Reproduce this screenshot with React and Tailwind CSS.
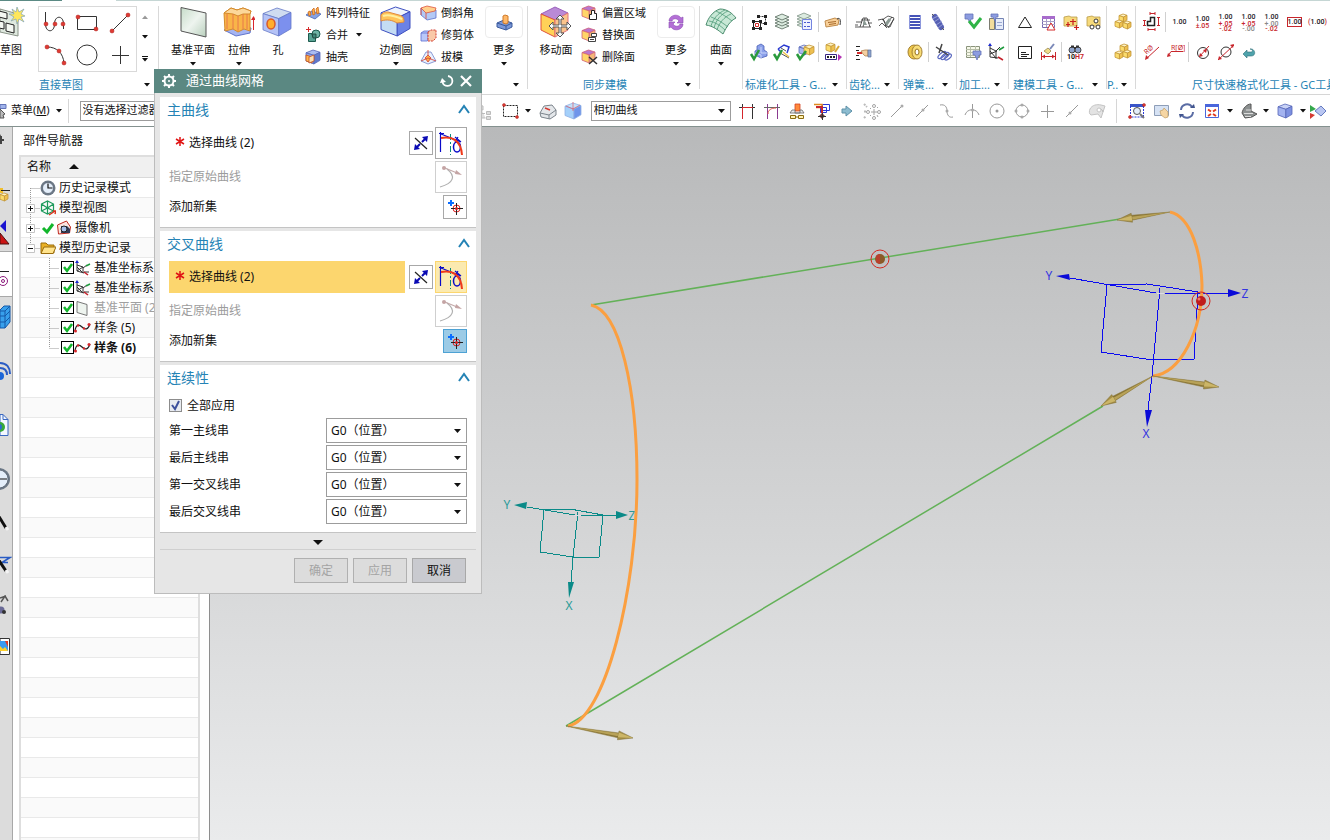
import { useState } from "react";

/* ---------- small drawing helpers ---------- */

function Svg({ w = 20, h = 20, className = "", children }) {
  return (
    <svg width={w} height={h} viewBox={`0 0 ${w} ${h}`} fill="none" aria-hidden="true" className={`shrink-0 ${className}`}>
      {children}
    </svg>
  );
}

function Cube({ x = 0, y = 0, s = 16, top = "#dfe6fb", left = "#a9b8f0", right = "#6f83dc", line = "#5566b8", lw = 0.8 }) {
  const p = (a, b) => `${x + a * s},${y + b * s}`;
  return (
    <g stroke={line} strokeWidth={lw} strokeLinejoin="round">
      <polygon points={`${p(0, 0.2)} ${p(0.5, 0)} ${p(1, 0.16)} ${p(0.56, 0.38)}`} fill={top} />
      <polygon points={`${p(0, 0.2)} ${p(0.56, 0.38)} ${p(0.56, 1)} ${p(0, 0.78)}`} fill={left} />
      <polygon points={`${p(0.56, 0.38)} ${p(1, 0.16)} ${p(1, 0.74)} ${p(0.56, 1)}`} fill={right} />
    </g>
  );
}

const Gold = (props) => <Cube top="#fff3c4" left="#fbdc6c" right="#eec050" line="#c4983a" {...props} />;
const Pink = (props) => <Cube top="#b877cf" left="#ffd568" right="#f4b878" line="#d0607a" {...props} />;
const Dot = ({ x, y, r = 2 }) => <circle cx={x} cy={y} r={r} fill="#e03a32" stroke="#a81f1c" strokeWidth="0.5" />;

function Caret({ className = "", color = "#111" }) {
  return (
    <Svg w={6} h={4} className={className}>
      <path d="M0 0h6L3 3.5z" fill={color} />
    </Svg>
  );
}

const Clock = ({ cx, cy, r }) => (
  <g>
    <circle cx={cx} cy={cy} r={r} fill="#6c7886" />
    <circle cx={cx} cy={cy} r={r - 2} fill="#e4eefa" stroke="#4c5866" strokeWidth="0.7" />
    <path d={`M${cx} ${cy - r + 3}V${cy}H${cx + r - 3}`} stroke="#111" strokeWidth="1.2" />
  </g>
);

const GreenCheck = ({ d = "M2 12l3 5 5-9" }) => <path d={d} stroke="#2a9a3c" strokeWidth="2.5" />;

/* ---------- ribbon icons ---------- */

const big = {
  sketch: (
    <Svg w={26} h={32}>
      <path d="M0 3L18 8V30L0 26z" fill="#dfe9df" stroke="#8a9488" />
      <path d="M-1 5l8 2v6l-8-2zM-1 15l5 1v7l-5-1zM6 17l8 2v8l-8-2z" fill="#f4f8f2" stroke="#222" />
      <path d="M17 1l2 5 5-3-3 5 4 2-4 1 3 5-5-3-2 5-1-5-5 2 3-4-5-3h5l-2-5 4 3z" fill="#ffe75a" stroke="#7fa3b8" strokeWidth="0.7" />
    </Svg>
  ),
  plane: (
    <Svg w={28} h={32}>
      <defs>
        <linearGradient id="pl" x1="0" y1="0" x2="1" y2="1">
          <stop offset="0" stopColor="#c6dcc9" />
          <stop offset="0.5" stopColor="#eef4ef" />
          <stop offset="1" stopColor="#b9d0bd" />
        </linearGradient>
      </defs>
      <path d="M2 1.500L27 7V31L2 25z" fill="url(#pl)" stroke="#555" />
    </Svg>
  ),
  extrude: (
    <Svg w={32} h={32}>
      <path d="M1 24l12 6 14-3 1-5-15-3z" fill="#a4b4f2" stroke="#6074cc" />
      <path d="M1 7l7-5 6 2 6-2 8 3-1 3v17l-6-2-6 3-5-3-8 2z" fill="#f9b548" stroke="#d48a2c" />
      <path d="M1 7l9 1 5 2 5-2 7 0 1-3-8-3-6 2-6-2z" fill="#fcd79a" stroke="#d48a2c" />
      <path d="M4 8v15M10 8v15M15 10v15M20 8v15M24 8v15" stroke="#e46a4c" strokeWidth="0.800" />
      <path d="M30.500 24V13" stroke="#d8262c" />
      <path d="M28 14l2.500-4 2.500 4z" fill="#d8262c" />
    </Svg>
  ),
  hole: (
    <Svg w={32} h={32}>
      <Cube x={1} y={2} s={28} top="#cfdcf0" left="#b4c2f6" right="#7c90ee" line="#6478c8" />
      <ellipse cx="9" cy="18" rx="4" ry="5" fill="#ffae2e" stroke="#d95a2a" strokeWidth="1.500" />
    </Svg>
  ),
  blend: (
    <Svg w={32} h={32}>
      <Cube x={1} y={1} s={29} top="#eef4fd" left="#c4dcf4" right="#6b82e6" line="#3d4fc0" lw={1} />
      <path d="M1 9c2-3 5-3 7-3l11 3c4 1 5 3 5 7l-7 1C12 14 7 13 1 15z" fill="#ffc45a" stroke="#e08a3e" />
      <path d="M3 10c5-2 12 0 19 3" stroke="#fff0a0" strokeWidth="2" />
    </Svg>
  ),
  more: (
    <Svg>
      <path d="M3 11l7-3 8 3v4l-6 3-9-3z" fill="#7b98d8" stroke="#3b5a9c" />
      <path d="M3 11l9 3 6-3M12 14v4" stroke="#3b5a9c" />
      <path d="M9 4l2-1 3 1v7l-2 1-3-1z" fill="#ffb868" stroke="#d07a28" />
    </Svg>
  ),
  moveFace: (
    <Svg w={32} h={32}>
      <path d="M1 8L15 1l13 6-13 7z" fill="#b98ad6" stroke="#9a60bc" />
      <path d="M1 8l14 6v17L1 24z" fill="#ffd257" stroke="#e0533c" />
      <path d="M15 14l13-7v17l-13 7z" fill="#fbc48c" stroke="#e0737c" />
      <path d="M20 9l4 4h-3v6h6v-3l4 4-4 4v-3h-6v6h3l-4 4-4-4h3v-6h-6v3l-4-4 4-4v3h6v-6h-3z" fill="#fafafa" stroke="#555" />
    </Svg>
  ),
  swap: (
    <Svg>
      <path d="M3 9c0-6 9-8 12-3l2-1v6h-6l2-2c-2-3-6-3-7 0z" fill="#b46fd6" stroke="#8c4fb4" strokeWidth="0.600" />
      <path d="M17 12c0 6-9 8-12 3l-2 1v-6h6l-2 2c2 3 6 3 7 0z" fill="#b46fd6" stroke="#8c4fb4" strokeWidth="0.600" />
    </Svg>
  ),
  surface: (
    <Svg w={32} h={32}>
      <path d="M1 19C3 12 8 5 15 3c7 0 12 4 16 9-6 3-9 8-13 16C13 24 8 20 1 19z" fill="#c8e8d6" stroke="#4c8d6f" />
      <path d="M6 11c6 2 12 6 17 10M11 5c6 3 11 6 16 10M4 15c6 1 12 5 16 9M6 20C8 13 13 7 20 4M12 24c2-7 7-13 14-16M9 22c2-8 7-14 14-17" stroke="#4f9a78" strokeWidth="0.800" />
    </Svg>
  ),
};

const small = {
  pattern: (
    <Svg w={17} h={16}>
      <path d="M1 10l6-4 9 3-6 5z" fill="#86a2e4" stroke="#4967b4" strokeWidth="0.800" />
      <path d="M3 7l2-1 1 4-2 1zM7 5l2-2 1 6-2 1zM11 4l2-2 1 6-2 1z" fill="#ffb04a" stroke="#cc6a1e" strokeWidth="0.800" />
    </Svg>
  ),
  unite: (
    <Svg w={17} h={16}>
      <path d="M3.500 0v5M1 2.500h5" stroke="#d42a2a" />
      <path d="M3.500 6.500h7v8h-7z" fill="#58a394" stroke="#1d5a4e" />
      <circle cx="11" cy="7" r="4" fill="#6db3a4" stroke="#1d5a4e" />
      <path d="M7 7h4v4H8z" fill="#3f8a7b" stroke="#1d3a34" strokeWidth="0.800" />
    </Svg>
  ),
  shell: (
    <Svg w={17} h={16}>
      <Cube x={1} y={1} s={14} top="#a9bcf2" left="#8da4e8" right="#5f79cc" />
      <path d="M1 6l6 2v6l-6-2z" fill="#ffb54e" stroke="#c4521e" strokeWidth="0.800" />
      <path d="M4 8l5-2v6l-5 2z" fill="#fbe0b4" stroke="#c4521e" strokeWidth="0.800" />
    </Svg>
  ),
  chamfer: (
    <Svg w={17} h={16}>
      <path d="M1 3l5 4 10-2v8l-9 2-6-5z" fill="#b3c9f5" stroke="#5a70cc" strokeWidth="0.800" />
      <path d="M1 3l6-2 9 2-1 3-9 2z" fill="#ffd08c" stroke="#dd5540" strokeWidth="0.800" />
      <path d="M1 3v7M6 8v6" stroke="#dd4530" strokeWidth="0.800" />
    </Svg>
  ),
  trim: (
    <Svg w={17} h={16}>
      <path d="M1 6l3-2h6v8l-3 2H1z" fill="#b9c8fa" stroke="#5a6cd0" strokeWidth="0.800" />
      <path d="M1 6h7v8" stroke="#5a6cd0" strokeWidth="0.800" />
      <path d="M8 5l3-2h5v8l-3 3H8z" fill="#f9c9a8" stroke="#d13c30" strokeDasharray="2 1" />
    </Svg>
  ),
  draft: (
    <Svg w={17} h={16}>
      <path d="M1 12L6 3h5l5 9-8 3z" fill="#e9effc" stroke="#7084cc" strokeWidth="0.800" />
      <path d="M5 9l3-3 3 3-3 4z" fill="#ffb04a" stroke="#d13c30" strokeWidth="0.800" />
      <path d="M8 1v5M1 12l7-3 8 3" stroke="#d13c30" strokeWidth="0.800" />
    </Svg>
  ),
  offset: (
    <Svg w={17} h={16}>
      <Pink x={1} y={1} s={13} />
      <path d="M8.500 9.500h2v-4h3v3h2v6h-7z" fill="#fff" stroke="#222" />
    </Svg>
  ),
  replace: (
    <Svg w={17} h={16}>
      <Pink x={1} y={1} s={13} />
      <path d="M10.500 6.500h5v3h-5zM7.500 10.500h7v4h-7zM9 12.500h4" fill="#fff" stroke="#444" />
    </Svg>
  ),
  remove: (
    <Svg w={17} h={16}>
      <Pink x={1} y={1} s={13} />
      <path d="M8 8l8 7M16 8l-8 7" stroke="#333" strokeWidth="1.500" />
    </Svg>
  ),
};

const tool = {
  attr: (
    <Svg>
      <path d="M4.500 9.500h7v7h-7z" stroke="#222" />
      <path d="M6.500 11.500h3v3h-3z" fill="#fff" stroke="#d42a2a" />
      <path d="M9.500 4.500h7v7h-5" stroke="#333" strokeDasharray="2 1" />
      <path d="M3 8h3v3H3zM10 8h3v3h-3zM3 15h3v3H3zM10 15h3v3h-3zM8 3h3v3H8zM15 3h3v3h-3zM15 10h3v3h-3z" fill="#222" />
    </Svg>
  ),
  layers: (
    <Svg>
      {[14, 11, 8, 5].map((y) => (
        <path key={y} d={`M3 ${y}l7-3 7 3-7 3z`} fill="#dcebe0" stroke="#55685c" strokeWidth="0.800" />
      ))}
    </Svg>
  ),
  layerList: (
    <Svg>
      {[13, 10, 7, 4].map((y) => (
        <path key={y} d={`M2 ${y}l7-3 7 3-7 3z`} fill="#dcebe0" stroke="#7f9387" strokeWidth="0.800" />
      ))}
      <path d="M7.500 7.500h9v10h-9z" fill="#eef2ff" stroke="#7484e0" />
      <path d="M9 10.500h2M12 10.500h3M9 14.500h2M12 14.500h3" stroke="#4a5ad0" />
    </Svg>
  ),
  tag: (
    <Svg>
      <path d="M2 9l10-3 4 2-1 5-12 2z" fill="#f8cf98" stroke="#c08c4c" />
      <path d="M5 10.500l8-1M6 12.500l7-1" stroke="#a96c2c" />
      <path d="M14 7c3-2 4 1 3 6" stroke="#333" />
    </Svg>
  ),
  checkPart: (
    <Svg>
      <path d="M8 4l4-2 3 2v4l3 2v4l-6 2-6-3v-4l2-1z" fill="#8ba0ea" stroke="#4a60b8" strokeWidth="0.800" />
      <path d="M12 5v6l6 0M6 11l6 2v3" stroke="#c9d5fa" />
      <GreenCheck />
    </Svg>
  ),
  checkDraw: (
    <Svg>
      <path d="M6 7l6-4 5 2-2 6M6 7l3 3" stroke="#2a3ad0" strokeWidth="1.500" fill="#fff" />
      <path d="M9 6l5 3M8 11l9 5" stroke="#555" />
      <path d="M11 10l6 5" stroke="#f0c34a" strokeWidth="1.500" />
      <GreenCheck />
    </Svg>
  ),
  checkAssy: (
    <Svg>
      <Cube x={4} y={3} s={10} />
      <Gold x={9} y={3} s={10} />
      <GreenCheck d="M2 12l3 5 6-8" />
    </Svg>
  ),
  stamp: (
    <Svg>
      <Gold x={3} y={1} s={9} />
      <path d="M2.500 12.500h11v5h-11z" fill="#fff" stroke="#3a2a86" />
      <path d="M4 15h2M7 15h2M10 15h2" stroke="#222" strokeWidth="2" />
      <path d="M16 4l-4 6" stroke="#d8a93a" strokeWidth="2" />
      <path d="M15 12l4 3-4 4z" fill="#b434b4" />
    </Svg>
  ),
  gear: (
    <Svg>
      <path d="M2 15h5l3-9h4l3 9M2 13h3M8 8h9M3 10h6M15 11h4M12 6l-2 9M7 15h11" stroke="#333" strokeWidth="0.800" />
      <path d="M10 13l1-6 3 6z" fill="#8b9a94" />
    </Svg>
  ),
  bevel: (
    <Svg>
      <path d="M2 8l5-1 3 7 4 1 4-9M6 8l6-4 6 2M9 14l7-9M3 14l3-3 5 5M7 7l4 7M12 16l6-9" stroke="#333" strokeWidth="0.800" />
      <path d="M9 11l4-5 2 2-4 6z" fill="#8b9a94" />
    </Svg>
  ),
  pointer: (
    <Svg>
      <path d="M3 4.500h4M3 8.500h3M3 13.500h3M3 17.500h4" stroke="#222" />
      <path d="M4 11h5" stroke="#d42a2a" strokeWidth="2" />
      <path d="M8 9l4-1h3v6h-3l-2-2z" fill="#f5cfa0" stroke="#a4743c" strokeWidth="0.700" />
      <path d="M15 8h3v7h-3z" fill="#8fa6cf" stroke="#5b7099" strokeWidth="0.700" />
    </Svg>
  ),
  spring: (
    <Svg>
      {[4, 7, 10, 13, 16].map((y) => (
        <path key={y} d={`M5 ${y}h11`} stroke="#4654b8" strokeWidth="2" />
      ))}
      <path d="M4.500 3v14M15.500 3v14" stroke="#8c97dc" />
    </Svg>
  ),
  tension: (
    <Svg>
      <path d="M7 5l6 10" stroke="#5660b4" strokeWidth="6" strokeLinecap="round" />
      <path d="M4 7l6-3M6 10l6-4M8 13l6-4M10 16l5-4" stroke="#a4addf" strokeWidth="0.800" />
      <path d="M6 4L4 2M14 16l2 2" stroke="#555" />
    </Svg>
  ),
  disc: (
    <Svg>
      <ellipse cx="9" cy="10" rx="6" ry="7" fill="#ecc64a" stroke="#a48030" />
      <ellipse cx="12" cy="10" rx="5" ry="7" fill="#f8dd78" stroke="#a48030" />
      <ellipse cx="12" cy="10" rx="2" ry="3" fill="#fff" stroke="#94701a" />
    </Svg>
  ),
  springDel: (
    <Svg>
      <g stroke="#5a68c0" strokeWidth="1.200">
        <ellipse cx="9" cy="13" rx="5" ry="2" transform="rotate(-40 9 13)" />
        <ellipse cx="12" cy="14" rx="5" ry="2" transform="rotate(-40 12 14)" />
        <ellipse cx="15" cy="15" rx="4" ry="2" transform="rotate(-40 15 15)" />
      </g>
      <path d="M3 5l12 8M9 2L6 11" stroke="#444" strokeWidth="1.500" />
    </Svg>
  ),
  procOk: (
    <Svg>
      <path d="M2 2h8v5H8l-1 4-2-4H2z" fill="#8c9ce0" stroke="#6474b8" strokeWidth="0.800" />
      <path d="M6 9l5 6 7-9" stroke="#2fb446" strokeWidth="3" />
    </Svg>
  ),
  procDoc: (
    <Svg>
      <path d="M3.500 6.500h5v11h-5z" fill="#f3dd9c" stroke="#7c7c70" />
      <path d="M9.500 6.500h8v11h-8z" fill="#e6ecfa" stroke="#7484b4" />
      <path d="M5 2h7v3h-2l-1 4-2-4H5z" fill="#8c9ce0" stroke="#6474b8" strokeWidth="0.800" />
      <path d="M11 10.500h5M11 13.500h5" stroke="#9aa8d0" />
    </Svg>
  ),
  procTable: (
    <Svg>
      <path d="M3.500 4.500h13v11h-13z" fill="#f6f8e8" stroke="#8a937c" />
      <path d="M3 7.500h13M3 10.500h13M3 13.500h13M7.500 4v11M12.500 4v11" stroke="#b7beA8" />
      <path d="M10 9h8v4h-2l-2 5-2-5h-2z" fill="#8c9ce0" stroke="#6474b8" strokeWidth="0.800" />
    </Svg>
  ),
  csys: (
    <Svg>
      <path d="M4 3v12M4 6l6 3v8M4 15l8 1M10 9l4-4M4 9l6 7M4 12l7-3" stroke="#333" />
      <path d="M2 4h4L4 1z" fill="#1a28d0" />
      <path d="M13 8l5-3" stroke="#1d9a3c" strokeWidth="1.500" />
      <path d="M12 15l5 3" stroke="#c4202a" strokeWidth="1.500" />
    </Svg>
  ),
  triangle: (
    <Svg>
      <path d="M10 5l6.500 10.500h-13z" stroke="#222" />
    </Svg>
  ),
  tableTri: (
    <Svg>
      <path d="M4.500 4.500h12v11h-12z" fill="#fff" stroke="#766ab0" />
      <path d="M4 4h13v3H4z" fill="#a86ccc" />
      <path d="M4 9.500h13M4 12.500h13M8.500 7v8M12.500 7v8" stroke="#a8a0c8" />
      <path d="M13 11l4 7H9z" fill="#fff" stroke="#d42a2a" />
    </Svg>
  ),
  folderPts: (
    <Svg>
      <path d="M3 5l5-1 2 1h6v9H3z" fill="#f6da7c" stroke="#b99a48" strokeWidth="0.800" />
      <path d="M9 9.500h6M12 7v6M13 15.500h5M15.500 13v5M5 12.500h4M7 10v5" stroke="#c81f1f" strokeWidth="1.200" />
    </Svg>
  ),
  folderRing: (
    <Svg>
      <path d="M3 5l5-1 2 1h6v9H3z" fill="#f6da7c" stroke="#b99a48" strokeWidth="0.800" />
      <circle cx="12" cy="9" r="2" fill="#fff" stroke="#333" />
      <circle cx="8" cy="15" r="2" fill="#fff" stroke="#333" />
      <circle cx="14" cy="15" r="2" fill="#fff" stroke="#333" />
    </Svg>
  ),
  note: (
    <Svg>
      <path d="M3.500 4.500h13v12h-13z" fill="#fff" stroke="#222" />
      <path d="M6 10.500h5M6 12.500h8M6 14.500h6" stroke="#222" />
    </Svg>
  ),
  brush: (
    <Svg>
      <path d="M16 2l-4 5" stroke="#7a88b8" strokeWidth="2" />
      <path d="M6 9l4-3 3 3-3 3z" fill="#f0dc8c" stroke="#9c8a4c" strokeWidth="0.800" />
      <path d="M3.500 10v8M17.500 10v8M4 14.500h13" stroke="#c8262c" />
      <path d="M4 14.500l3-2v4zM17 14.500l-3-2v4z" fill="#c8262c" />
    </Svg>
  ),
  addBox: (
    <Svg>
      <Gold x={6} y={2} s={8} />
      <Gold x={2} y={8} s={8} />
      <Gold x={10} y={9} s={8} />
    </Svg>
  ),
  boxes: (
    <Svg>
      <Gold x={7} y={2} s={8} />
      <Gold x={2} y={9} s={8} />
      <Gold x={10} y={8} s={8} />
    </Svg>
  ),
  dimIcon: (
    <Svg>
      <path d="M5.500 13.500v-4h3v-4h4v8z" fill="#fff" stroke="#222" strokeWidth="1.500" />
      <path d="M8 1.500h5M8 0v3M13 0v3M6 17.500h7M6 16v3M13 16v3M2.500 8v6M1 8.500h3M1 13.500h3M16.500 5v9M15 5.500h3M15 13.500h3" stroke="#c8262c" />
    </Svg>
  ),
  diagR: (
    <Svg>
      <path d="M4 17L17 5" stroke="#c8262c" />
      <path d="M3 18l1-5 3 3z" fill="#c8262c" />
      <text x="3" y="11" fontSize="7" fill="#c8262c" transform="rotate(-42 6 10)">RØ</text>
    </Svg>
  ),
  flagR: (
    <Svg>
      <path d="M3 14l3-4.500h12" stroke="#c8262c" />
      <path d="M2 15l1-4 3 3z" fill="#c8262c" />
      <text x="6" y="8" fontSize="7" fill="#c8262c">R[Ø]</text>
    </Svg>
  ),
  diaIn: (
    <Svg>
      <circle cx="10" cy="11" r="5.500" stroke="#333" />
      <path d="M6 15L16 4" stroke="#c8262c" />
      <path d="M6 15l1-4 3 3zM14 7l-1 4-3-3z" fill="#c8262c" />
    </Svg>
  ),
  diaOut: (
    <Svg>
      <circle cx="10" cy="10" r="5" stroke="#333" />
      <path d="M2 18L18 3" stroke="#c8262c" />
      <path d="M2 18l1-4 3 3zM18 2l-4 1 3 3z" fill="#c8262c" />
    </Svg>
  ),
  back: (
    <Svg>
      <path d="M4 12l4-4v2h4c3 0 1-3-1-3 5-1 7 7 1 7H8v2z" fill="#4fa3ac" stroke="#2f7078" strokeWidth="0.600" />
    </Svg>
  ),
};

const bar = {
  ghostTree: (
    <Svg>
      <path d="M2 5l2-1 4 1v4H3zM6.500 8v9h4M6 12.500h4M11.500 10.500h4v3h-4zM11.500 15.500h4v3h-4z" fill="#ddd" stroke="#bbb" />
    </Svg>
  ),
  rect: (
    <Svg>
      <path d="M3.500 4.500h14v11h-14z" stroke="#222" strokeDasharray="2 1" />
      <Dot x={4} y={4} r={1.500} />
      <Dot x={17} y={16} r={1.500} />
    </Svg>
  ),
  faceBox: (
    <Svg>
      <path d="M2 12l4-7 8-1 4 5v5l-6 4-9-2z" fill="#e4e7ea" stroke="#7c848c" />
      <path d="M2 12l9 2 7-5M11 14v4" stroke="#7c848c" />
      <path d="M7 7l5 2" stroke="#d43a32" strokeWidth="1.500" />
    </Svg>
  ),
  blueBox: (
    <Svg>
      <Cube x={2} y={2} s={16} top="#c3e0fa" left="#a4d0fa" right="#6f94ea" line="#8fb0e4" />
      <path d="M10 1v9M3 5l7 3 7-4" stroke="#e05a64" strokeWidth="0.700" />
    </Svg>
  ),
  stopA: (
    <Svg>
      <path d="M5.500 3v15M15.500 3v15M2 6.500h3M15 6.500h3" stroke="#333" />
      <path d="M5 6.500h11M5.500 6v12" stroke="#d4262c" />
    </Svg>
  ),
  stopB: (
    <Svg>
      <path d="M5.500 3v15M15.500 3v15" stroke="#8a3a90" />
      <path d="M2 6.500h16" stroke="#666" />
      <path d="M6 13c0-4 3-6 8-6" stroke="#e4564c" />
    </Svg>
  ),
  chain: (
    <Svg>
      <path d="M8 3h5v7H8z" fill="#ff8a3c" stroke="#d4421e" strokeWidth="0.800" />
      <path d="M5 9h3v3h5V9h2l2 3H3z" fill="#e8ebee" stroke="#666" strokeWidth="0.800" />
      <path d="M3.500 14.500h5v3h-5zM11.500 14.500h5v3h-5zM8 16h4" fill="#fff2b0" stroke="#8a6a10" />
    </Svg>
  ),
  follow: (
    <Svg>
      <path d="M10.500 3.500h7v6h-7zM8.500 6.500h6v5h-6z" stroke="#2a3ad8" />
      <path d="M2 3.500h8v3H4" stroke="#e08a1c" strokeWidth="1.500" />
      <path d="M4 6h6v6" stroke="#c8262c" strokeWidth="2" />
      <path d="M10 12l3 3-3 3-3-3z" fill="#7a3a3a" />
      <path d="M6 15.500h8M10.500 12v7" stroke="#333" />
    </Svg>
  ),
  arrow: (
    <Svg>
      <path d="M5 8h4V5l6 5-6 5v-3H5z" fill="#8cbcd0" stroke="#5e91a8" />
    </Svg>
  ),
  snap: (
    <Svg>
      <g stroke="#a4a4a4">
        <circle cx="12" cy="5" r="1.500" />
        <circle cx="12" cy="17" r="1.500" />
        <circle cx="6" cy="11" r="1.500" />
        <circle cx="17" cy="11" r="1.500" />
        <path d="M12 8v6M9 11h6M8 7l1 1M15 7l1-1M8 15l1-1M15 14l1 2" />
      </g>
      <path d="M2 3l3 3M2 10.500h3M2 17l2-2" stroke="#bbb" strokeWidth="2" strokeDasharray="2 1" />
    </Svg>
  ),
  endPt: (
    <Svg>
      <path d="M4 16L15 5" stroke="#999" />
      <circle cx="15" cy="5" r="1.500" fill="#aaa" />
    </Svg>
  ),
  midPt: (
    <Svg>
      <path d="M4 16L16 4" stroke="#999" />
      <circle cx="11" cy="9" r="1.500" fill="#aaa" />
    </Svg>
  ),
  ctrlPt: (
    <Svg>
      <path d="M3 4c5-1 7 2 7 6s2 7 6 6" stroke="#999" />
      <circle cx="10" cy="10" r="1.500" fill="#aaa" />
    </Svg>
  ),
  cross: (
    <Svg>
      <path d="M3 14c2-7 12-7 14 0M10.500 3v14" stroke="#999" />
      <circle cx="10.500" cy="9" r="1.500" fill="#aaa" />
    </Svg>
  ),
  center: (
    <Svg>
      <circle cx="10" cy="10" r="7" stroke="#999" />
      <circle cx="10" cy="10" r="1.500" fill="#999" />
    </Svg>
  ),
  quad: (
    <Svg>
      <circle cx="10" cy="10" r="6" stroke="#999" />
      <g fill="#aaa">
        <circle cx="10" cy="4" r="1.500" />
        <circle cx="10" cy="16" r="1.500" />
        <circle cx="4" cy="10" r="1.500" />
        <circle cx="16" cy="10" r="1.500" />
      </g>
    </Svg>
  ),
  plus: (
    <Svg>
      <path d="M4 10.500h13M10.500 4v13" stroke="#999" />
    </Svg>
  ),
  onCurve: (
    <Svg>
      <path d="M4 16L16 4" stroke="#999" />
      <circle cx="8" cy="12" r="1.500" fill="#aaa" />
    </Svg>
  ),
  onFace: (
    <Svg>
      <path d="M3 8c2-4 7-5 11-4l4 1-4 12-3-4-7 1c-2-1-2-4-1-6z" fill="#e3e3e3" stroke="#c4c4c4" />
      <path d="M12 8c2 0 4 1 4 3" stroke="#b4b4b4" />
      <circle cx="12" cy="9" r="2" fill="#fff" stroke="#c4c4c4" />
    </Svg>
  ),
  fit: (
    <Svg>
      <path d="M3 3h14v3H3z" fill="#3a56c8" />
      <path d="M3.500 5v11h13V5" stroke="#2a3ad8" strokeDasharray="2 1" />
      <circle cx="10" cy="10" r="3.500" fill="#e4eefa" stroke="#555" />
      <path d="M13 13l4 4" stroke="#777" strokeWidth="2" />
      <Dot x={3} y={16} r={1.500} />
      <Dot x={17} y={4} r={1.500} />
    </Svg>
  ),
  pan: (
    <Svg>
      <path d="M2.500 4.500h14v10h-14z" fill="#d6e2f4" stroke="#8e9eb8" />
      <path d="M8 10l3-1 1-2 2 2 2 2v5l-3 1-4-3z" fill="#f6d6a4" stroke="#c09c60" strokeWidth="0.700" />
    </Svg>
  ),
  rotate: (
    <Svg>
      <path d="M4 9a6 6 0 0 1 11-3M16 11a6 6 0 0 1-11 3" stroke="#5a6ca4" strokeWidth="2" />
      <path d="M13 7h5l-1-4zM7 13H2l1 4z" fill="#41558e" />
    </Svg>
  ),
  window: (
    <Svg>
      <path d="M3.500 3.500h13v13h-13z" fill="#fff" stroke="#4a66dc" />
      <path d="M3 3h14v3H3z" fill="#4a66dc" />
      <path d="M6 8.500l3 2M14 8.500l-3 2M6 15l3-2M14 15l-3-2" stroke="#e0381e" strokeWidth="2" />
    </Svg>
  ),
  shade: (
    <Svg>
      <path d="M3 12c1-5 5-9 9-9v7l6 3-5 3-7 1z" fill="#8c9090" stroke="#555" />
      <path d="M5 12.500h9M7 9l5 0M6 15.500h6" stroke="#ddd" />
    </Svg>
  ),
  viewBox: (
    <Svg>
      <Cube x={3} y={3} s={14} top="#c8d2f6" left="#a3b3f0" right="#7c90e0" />
    </Svg>
  ),
  clip: (
    <Svg>
      <path d="M2 4l6 4-6 3z" fill="#35a84c" />
      <path d="M2 12l5 2-5 4z" fill="#d43a32" />
      <path d="M7 10l6-5 5 5-5 5z" fill="#b9c6f2" stroke="#657bc0" />
    </Svg>
  ),
};

/* ---------- ribbon ---------- */

const Sep = () => <div className="my-[5px] w-px shrink-0 bg-[#d9d9d9]" />;
const MiniSep = () => <div className="mx-0.5 h-5 w-px shrink-0 self-center bg-[#d0d0d0]" />;

function Group({ label, labelClass = "pl-0.5", className = "", last = false, children }) {
  return (
    <>
      <section className={`flex shrink-0 flex-col overflow-hidden ${className}`}>
        <div className="flex h-[71px]">{children}</div>
        <div className="mt-[5px] flex h-4 items-center justify-between pr-2">
          <span className={`whitespace-nowrap text-[11px] leading-4 text-[#2583b5] ${labelClass}`}>{label}</span>
          {!last && <Caret />}
        </div>
      </section>
      {!last && <Sep />}
    </>
  );
}

function BigButton({ icon, label, caret = true, boxed = false, className = "" }) {
  return (
    <button type="button" className={`flex shrink-0 flex-col items-center pt-[5px] ${className}`}>
      <span className={`flex h-8 items-center justify-center ${boxed ? "w-full rounded border border-[#ececec]" : ""}`}>{icon}</span>
      <span className="mt-1 h-4 whitespace-nowrap text-[11px] leading-4">{label}</span>
      {caret && <Caret className="mt-1" />}
    </button>
  );
}

function Column({ items, className = "" }) {
  return (
    <div className={`flex shrink-0 flex-col pt-px ${className}`}>
      {items.map(([icon, label, caret]) => (
        <button key={label} type="button" className="flex h-[22px] items-center gap-1 whitespace-nowrap text-[11px]">
          {small[icon]}
          {label}
          {caret && <Caret className="ml-1" />}
        </button>
      ))}
    </div>
  );
}

function ToolGrid({ rows }) {
  return (
    <div className="flex flex-col pl-1 pt-1.5">
      {rows.map((row, i) => (
        <div key={i} className="flex h-[30px]">
          {row.map((item, j) =>
            item === "|" ? (
              <MiniSep key={j} />
            ) : (
              <button key={j} type="button" aria-label={typeof item === "string" ? item : "1.00"} className="flex w-[23px] shrink-0 items-center justify-center">
                {typeof item === "string" ? tool[item] : item}
              </button>
            )
          )}
        </div>
      ))}
    </div>
  );
}

// dimension text with an optional tolerance below it
function Tol({ up, down, className = "" }) {
  return (
    <span className={`flex flex-col items-center font-['Roboto',sans-serif] text-[7px] font-medium leading-[8px] text-[#222] ${className}`}>
      1.00
      {up && <span className={`leading-[6px] ${up === "+.00" ? "text-[#888]" : "text-[#c8262c]"}`}>{up}</span>}
      {down && <span className={`leading-[5px] ${down === "-.00" ? "text-[#888]" : "text-[#c8262c]"}`}>{down}</span>}
    </span>
  );
}

const fitTool = (
  <span className="flex flex-col items-center font-['Roboto',sans-serif] text-[7px] font-bold leading-[7px]">
    <Svg w={14} h={10}>
      <circle cx="4" cy="6" r="3" fill="#8fa4cc" stroke="#444" />
      <circle cx="10" cy="6" r="3" fill="#8fa4cc" stroke="#444" />
      <path d="M3 2.500h3M8 2.500h3M6 4h2" stroke="#333" strokeWidth="2" />
    </Svg>
    <span>
      10<span className="text-[#c8262c]">H7</span>
    </span>
  </span>
);

const sketchTools = [
  ["轮廓", <Svg key="a" w={24} h={24}><path d="M2.500 1v12c0 9 9 9 9 0 0-9 9-9 9 0v5" stroke="#333" /><Dot x={3} y={13} /><Dot x={12} y={13} /><Dot x={20} y={13} /></Svg>],
  ["矩形", <Svg key="b" w={24} h={24}><path d="M2.500 5.500h19v13h-19z" stroke="#333" /><Dot x={3} y={6} /><Dot x={21} y={18} /></Svg>],
  ["直线", <Svg key="c" w={24} h={24}><path d="M4 20L20 4" stroke="#333" /><Dot x={4} y={20} /><Dot x={20} y={4} /></Svg>],
  ["圆弧", <Svg key="d" w={24} h={24}><path d="M4 4c10 0 16 6 17 16" stroke="#333" /><Dot x={4} y={4} /><Dot x={16} y={8} /><Dot x={21} y={20} /></Svg>],
  ["圆", <Svg key="e" w={24} h={24}><circle cx="12" cy="12" r="10" stroke="#333" /></Svg>],
  ["点", <Svg key="f" w={24} h={24}><path d="M12.500 3v18M4 12.500h17" stroke="#333" /></Svg>],
];

function Ribbon() {
  return (
    <header>
      <div className="flex h-px">
        <div className="w-[62px] bg-[#5b8a84]" />
        <div className="w-[54px]" />
        <div className="flex-1 bg-[#c5d6d4]" />
      </div>
      <div className="flex h-[94px] overflow-hidden border-b border-[#d6d6d6]">
        <Group label="直接草图" labelClass="pl-[39px]" className="w-[158px]">
          <button type="button" className="flex w-[38px] shrink-0 flex-col items-start pt-[5px]">
            {big.sketch}
            <span className="mt-1 flex h-4 w-[22px] justify-end whitespace-nowrap text-[11px] leading-4">草图</span>
          </button>
          <div className="mt-[5px] grid h-[66px] w-[99px] shrink-0 grid-cols-3 border border-[#d9d9d9]">
            {sketchTools.map(([name, icon]) => (
              <button key={name} type="button" aria-label={name} className="flex items-center justify-center">
                {icon}
              </button>
            ))}
          </div>
          <div className="flex w-4 flex-col items-center justify-around pb-0.5 pt-1.5">
            <Caret className="rotate-180" color="#999" />
            <Caret />
            <Svg w={6} h={6}>
              <path d="M0 0.500h6" stroke="#111" />
              <path d="M0 2h6L3 5.500z" fill="#111" />
            </Svg>
          </div>
        </Group>
        <Group label="特征" labelClass="pl-[160px]" className="w-[368px]">
          <BigButton icon={big.plane} label="基准平面" className="ml-2.5 w-12" />
          <BigButton icon={big.extrude} label="拉伸" className="w-11" />
          <BigButton icon={big.hole} label="孔" caret={false} className="w-[34px]" />
          <Column className="ml-2.5 w-[69px]" items={[["pattern", "阵列特征"], ["unite", "合并", true], ["shell", "抽壳"]]} />
          <BigButton icon={big.blend} label="边倒圆" className="w-11" />
          <Column className="ml-0.5 w-[65px]" items={[["chamfer", "倒斜角"], ["trim", "修剪体"], ["draft", "拔模"]]} />
          <BigButton icon={big.more} label="更多" boxed className="w-[38px]" />
        </Group>
        <Group label="同步建模" labelClass="pl-[55px]" className="w-[171px]">
          <BigButton icon={big.moveFace} label="移动面" caret={false} className="ml-1 w-12" />
          <Column className="ml-px w-[76px]" items={[["offset", "偏置区域"], ["replace", "替换面"], ["remove", "删除面"]]} />
          <BigButton icon={big.swap} label="更多" boxed className="w-[38px]" />
        </Group>
        <section className="flex w-[42px] shrink-0 justify-center">
          <BigButton icon={big.surface} label="曲面" />
        </section>
        <Sep />
        <Group label="标准化工具 - G..." className="w-[103px]">
          <ToolGrid rows={[["attr", "layers", "layerList", "|", "tag"], ["checkPart", "checkDraw", "checkAssy", "|", "stamp"]]} />
        </Group>
        <Group label="齿轮..." className="w-[51px]">
          <ToolGrid rows={[["gear", "bevel"], ["pointer"]]} />
        </Group>
        <Group label="弹簧..." labelClass="pl-1" className="w-[57px]">
          <ToolGrid rows={[["spring", "tension"], ["disc", "|", "springDel"]]} />
        </Group>
        <Group label="加工..." className="w-[51px]">
          <ToolGrid rows={[["procOk", "procDoc"], ["procTable", "csys"]]} />
        </Group>
        <Group label="建模工具 - G..." labelClass="pl-1" className="w-[97px]">
          <ToolGrid rows={[["triangle", "tableTri", "folderPts", "folderRing"], ["note", "brush", "|", fitTool]]} />
        </Group>
        <Group label="P.." labelClass="" className="w-[28px]">
          <ToolGrid rows={[["addBox"], ["boxes"]]} />
        </Group>
        <Group label="尺寸快速格式化工具 - GC工具" labelClass="pl-14" className="min-w-[194px] flex-1" last>
          <ToolGrid
            rows={[
              [
                "dimIcon",
                "|",
                <Tol key="1" />,
                <Tol key="2" up="±.05" />,
                <Tol key="3" up="+.05" down="-.02" />,
                <Tol key="4" up="+.05" down="-.00" />,
                <Tol key="5" up="+.00" down="-.02" />,
                <Tol key="6" className="border border-[#c8262c]" />,
                <span key="7" className="font-['Roboto',sans-serif] text-[7px] font-medium">
                  <span className="text-[#c8262c]">(</span>1.00<span className="text-[#c8262c]">)</span>
                </span>,
              ],
              ["diagR", "flagR", "|", "diaIn", "diaOut", "back"],
            ]}
          />
        </Group>
      </div>
    </header>
  );
}

/* ---------- selection bar ---------- */

function BarButton({ name }) {
  return (
    <button type="button" aria-label={name} className="flex w-[25px] shrink-0 items-center justify-center">
      {bar[name]}
    </button>
  );
}

function Combo({ label, options, className = "", height = "h-5" }) {
  return (
    <span className={`relative flex shrink-0 ${className}`}>
      <select aria-label={label} className={`w-full appearance-none border border-[#9c9c9c] bg-white pl-1 text-[12px] text-[#111] ${height}`}>
        {options.map((o) => (
          <option key={o}>{o}</option>
        ))}
      </select>
      <span className="pointer-events-none absolute inset-y-0 right-1.5 flex items-center">
        <Svg w={7} h={4}>
          <path d="M0 0h7L3.500 4z" fill="#111" />
        </Svg>
      </span>
    </span>
  );
}

const snapTools = ["stopA", "stopB", "chain", "follow", "arrow", "snap", "endPt", "midPt", "ctrlPt", "cross", "center", "quad", "plus", "onCurve", "onFace"];

function SelectionBar() {
  return (
    <div className="flex h-8 items-center overflow-hidden border-b border-[#84918f]">
      <button type="button" className="flex shrink-0 items-center gap-1 text-[11px]">
        <Svg w={7} h={16}>
          <path d="M0 1.500h6v4H0z" fill="#9fb2ea" stroke="#6475b8" />
          <path d="M0 6l5 5-2 1 1 3H0z" fill="#bbb" stroke="#555" />
        </Svg>
        <span className="whitespace-nowrap">
          菜单(<u>M</u>)
        </span>
        <Caret className="ml-0.5" />
      </button>
      <div className="ml-1.5 h-6 w-px shrink-0 bg-[#d6d6d6]" />
      <Combo label="类型过滤器" options={["没有选择过滤器"]} className="ml-[11px] w-[150px] [&>select]:pl-0.5 [&>select]:text-[11px]" />
      <div className="w-[243px] shrink-0" />
      <BarButton name="ghostTree" />
      <BarButton name="rect" />
      <Caret className="ml-0.5" />
      <span className="w-[5px] shrink-0" />
      <BarButton name="faceBox" />
      <BarButton name="blueBox" />
      <Combo label="曲线规则" options={["相切曲线"]} className="ml-[5px] w-[140px] [&>select]:pl-0.5 [&>select]:text-[11px]" />
      <span className="w-1 shrink-0" />
      {snapTools.map((n) => (
        <BarButton key={n} name={n} />
      ))}
      <div className="ml-1.5 mr-2 h-6 w-px shrink-0 bg-[#d6d6d6]" />
      <BarButton name="fit" />
      <BarButton name="pan" />
      <BarButton name="rotate" />
      <BarButton name="window" />
      <Caret className="ml-0.5 mr-1" />
      <BarButton name="shade" />
      <Caret className="ml-px mr-1" />
      <BarButton name="viewBox" />
      <Caret className="ml-0.5" />
      <BarButton name="clip" />
    </div>
  );
}

/* ---------- resource bar and navigator ---------- */

function RailButton({ label, h = 24, className = "", children }) {
  return (
    <button type="button" aria-label={label} className={`flex shrink-0 items-start ${className}`}>
      <Svg w={12} h={h}>{children}</Svg>
    </button>
  );
}

function ResourceBar() {
  return (
    <nav className="flex w-[13px] shrink-0 flex-col overflow-hidden border-r border-[#a8a8a8] bg-[#dcdcdc]">
      <RailButton label="设置" className="h-[54px]">
        <path d="M-2 8h2l1 2h1v3h2v2H2v3H0z" transform="translate(0 -1)" fill="#444" />
      </RailButton>
      <RailButton label="装配导航器" className="h-[35px]">
        <path d="M0 7h3v5H0z" fill="#f0be2c" />
        <path d="M1 9.500h9" stroke="#222" />
        <Gold x={0} y={12} s={8} />
      </RailButton>
      <RailButton label="约束导航器" h={26} className="h-[35px] pt-1">
        <path d="M0 6l6-6v12z" fill="#1a14d0" />
        <path d="M0 13l9 11H0z" fill="#cc1414" stroke="#501010" />
      </RailButton>
      <RailButton label="部件导航器" className="-mr-px h-[46px] border-y border-[#a8a8a8] bg-white pt-3">
        <path d="M0 7.500h9" stroke="#222" />
        <circle cx="3" cy="17" r="4.500" stroke="#8c1a7c" />
        <circle cx="3" cy="17" r="1.500" stroke="#8c1a7c" />
      </RailButton>
      <RailButton label="重用库" h={26} className="mt-2 h-[54px]">
        <path d="M0 5l4-4h6v16l-5 6H0z" fill="#38a0ec" stroke="#1458a8" />
        <path d="M0 6h5l5-5M5 6v17M0 11h5l5-5M0 17h5l5-5" stroke="#1458a8" />
      </RailButton>
      <RailButton label="HD3D" h={26} className="h-[54px]">
        <circle cx="0" cy="17" r="4" fill="#1c66d8" />
        <path d="M0 9c5 0 7 3 7 7M0 4c7 0 10 5 10 11" stroke="#2a5cc4" strokeWidth="2" />
      </RailButton>
      <RailButton label="浏览器" className="h-[54px]">
        <path d="M0 1.500h3l5 5v16H0z" fill="#f4f8ff" stroke="#3a68c0" />
        <path d="M3 1.500v5h5" stroke="#3a68c0" />
        <circle cx="0" cy="14" r="5" fill="#38a838" />
        <circle cx="-1" cy="14" r="3" fill="#2a6ad0" />
      </RailButton>
      <RailButton label="历史记录" className="h-11">
        <Clock cx={-1} cy={12} r={11} />
      </RailButton>
      <RailButton label="向导" className="h-[42px]">
        <path d="M-2 4L6 17" stroke="#111" strokeWidth="3" />
        <path d="M6 16l2 3" stroke="#f4f4f4" strokeWidth="3" />
      </RailButton>
      <RailButton label="加工向导" className="h-[42px]">
        <path d="M0 4.500h10L2 9.500h6" stroke="#2a5cc4" strokeWidth="1.500" />
        <path d="M-2 6L6 18" stroke="#111" strokeWidth="3" />
        <path d="M6 17l2 3" stroke="#f4f4f4" strokeWidth="3" />
      </RailButton>
      <RailButton label="角色" h={26} className="h-[42px]">
        <path d="M0 3l6-2M1 7l4-6 3 5" stroke="#555" strokeWidth="1.500" />
        <circle cx="1" cy="15" r="3.500" fill="#6a6a96" />
        <circle cx="4" cy="17" r="2" fill="#333" />
      </RailButton>
      <RailButton label="系统场景" h={20} className="h-6">
        <path d="M0 1.500h9.500v16H0z" fill="#fff" stroke="#333" />
        <path d="M0 4h8v10H0z" fill="#3a9af0" />
        <path d="M0 14V9l3 3 2-2 3 4z" fill="#ffd028" />
        <path d="M5 4h3v6z" fill="#e43a22" />
      </RailButton>
    </nav>
  );
}

// dotted connector lines in front of a tree row
function Branch({ kind, sign }) {
  const child = kind === "child" || kind === "childLast";
  const x = child ? 28.5 : 9.5;
  const from = kind === "first" ? 10 : 0;
  const to = kind === "last" || kind === "childLast" ? 10 : 20;
  return (
    <Svg w={child ? 40 : 19} h={20}>
      <path d={`M${x} ${from}V${to}M${x} 10.500h9`} stroke="#999" strokeDasharray="1 1" />
      {sign && (
        <g>
          <path d="M5.500 6.500h8v8h-8z" fill="#fff" stroke="#c4c4c4" />
          <path d={sign === "+" ? "M7 10.500h5M9.500 8v5" : "M7 10.500h5"} stroke="#111" />
        </g>
      )}
    </Svg>
  );
}

const treeIcon = {
  clock: <Svg w={16} h={16}><Clock cx={8} cy={8} r={7.5} /></Svg>,
  views: (
    <Svg w={16} h={16}>
      <path d="M1.500 4l6-3 6 3v7l-6 3-6-3zM1.500 4l6 4 6-4M7.500 1v13M1.500 11l6-3 6 3" stroke="#1d9a5c" strokeWidth="1.200" />
      <path d="M9 15l6-4M13 11h3l-1 3" stroke="#d8321e" strokeWidth="1.500" />
    </Svg>
  ),
  camera: (
    <Svg w={16} h={16}>
      <path d="M1.500 5l9-4 4 6-1 6-11 1z" fill="#fbe4e0" stroke="#c0281e" />
      <path d="M5 6h6l3 3v4H5z" fill="#333c58" />
      <circle cx="8" cy="9" r="3" fill="#a8c0ec" stroke="#222" />
    </Svg>
  ),
  folder: (
    <Svg w={16} h={16}>
      <path d="M1 3h5l2 2h6v8H1z" fill="#e9b024" stroke="#9a6c0c" />
      <path d="M1 13.500L4 7h12l-3 6.500z" fill="#ffe38c" stroke="#9a6c0c" />
    </Svg>
  ),
  csys: (
    <Svg w={17} h={16}>
      <path d="M3 2v9l7 2M3 5l6 2v6M3 11l6-4M9 8l4-3M3 7l6 6M10 12h5" stroke="#333" />
      <path d="M1 3h4L3 0z" fill="#1a28d0" />
      <path d="M12 6l4-2" stroke="#1d9a3c" strokeWidth="1.500" />
      <path d="M10 12l4 3" stroke="#c4202a" strokeWidth="1.500" />
    </Svg>
  ),
  plane: (
    <Svg w={17} h={16}>
      <path d="M3 1.500l10 3v11l-10-3z" fill="#eef4ef" stroke="#777" />
    </Svg>
  ),
  spline: (
    <Svg w={17} h={16}>
      <path d="M1 11c1-7 4-7 7-4s6 3 8-3" stroke="#222" strokeWidth="1.200" />
      <g fill="#d8262c">
        <circle cx="1.500" cy="11" r="1.500" />
        <circle cx="4" cy="5.500" r="1.200" />
        <circle cx="10" cy="8.500" r="1.200" />
        <circle cx="15" cy="4.500" r="1.500" />
      </g>
    </Svg>
  ),
};

const treeRows = [
  { kind: "first", icon: "clock", text: "历史记录模式" },
  { kind: "mid", sign: "+", icon: "views", text: "模型视图" },
  { kind: "mid", sign: "+", check: true, icon: "camera", text: "摄像机" },
  { kind: "last", sign: "-", icon: "folder", text: "模型历史记录" },
  { kind: "child", box: true, icon: "csys", text: "基准坐标系 (0)" },
  { kind: "child", box: true, icon: "csys", text: "基准坐标系 (1)" },
  { kind: "child", box: true, icon: "plane", text: "基准平面 (2)", dim: true },
  { kind: "child", box: true, icon: "spline", text: "样条 (5)" },
  { kind: "childLast", box: true, icon: "spline", text: "样条 (6)", bold: true },
];
const emptyRows = Array.from({ length: 25 }, (_, i) => i);

function Navigator() {
  return (
    <aside className="flex w-[197px] shrink-0 flex-col border-r border-[#8e8e8e] bg-white pl-1.5">
      <h2 className="h-7 pl-1 text-[12px] leading-7">部件导航器</h2>
      <div className="mr-[9px] flex-1 overflow-hidden border-2 border-b-0 border-[#dedede]">
        <div className="flex h-[21px] items-center gap-[18px] border-b border-[#d9d9d9] bg-[#f0f0f0] pl-1.5 text-[12px]">
          名称
          <Svg w={10} h={6}>
            <path d="M5 0l5 5H0z" fill="#111" />
          </Svg>
        </div>
        <ul>
          {treeRows.map((r, i) => (
            <li
              key={i}
              className={`flex h-5 items-center whitespace-nowrap border-b border-[#e9e9e9] text-[12px] even:bg-[#fafafa] ${r.dim ? "text-[#a0a0a0]" : ""} ${r.bold ? "font-bold" : ""}`}
            >
              <Branch kind={r.kind} sign={r.sign} />
              {r.check && (
                <Svg w={16} h={16}>
                  <path d="M3 8l4 4 6-8" stroke="#12b62c" strokeWidth="3" />
                </Svg>
              )}
              {r.box && (
                <span className="relative flex">
                  <input type="checkbox" defaultChecked aria-label={r.text} className="peer size-[13px] appearance-none border border-black bg-white" />
                  <span className="pointer-events-none absolute inset-0 hidden peer-checked:block">
                    <Svg w={13} h={13}>
                      <path d="M3 6l3 4 5-7" stroke="#12b62c" strokeWidth="2.500" />
                    </Svg>
                  </span>
                </span>
              )}
              {treeIcon[r.icon]}
              <span className="pl-[3px]">{r.text}</span>
            </li>
          ))}
          {emptyRows.map((i) => (
            <li key={i} className="h-5 border-b border-[#e9e9e9] odd:bg-white even:bg-[#fafafa]" />
          ))}
        </ul>
      </div>
    </aside>
  );
}

/* ---------- graphics window ---------- */

function GoldArrow({ from, to }) {
  const [x1, y1] = from;
  const [x2, y2] = to;
  const len = Math.hypot(x2 - x1, y2 - y1);
  const ux = (x2 - x1) / len;
  const uy = (y2 - y1) / len;
  const bx = x2 - ux * 15;
  const by = y2 - uy * 15;
  const at = (k) => `${bx - uy * k},${by + ux * k}`;
  return (
    <g>
      <polygon points={`${x1},${y1} ${at(2.5)} ${at(-2.5)}`} fill="#8a7636" stroke="#8a7636" strokeWidth="0.500" />
      <polygon points={`${x1},${y1} ${at(1)} ${at(-2)}`} fill="#b8a258" />
      <polygon points={`${x2},${y2} ${at(4.5)} ${at(-4.5)}`} fill="#a48e46" stroke="#7d6b30" strokeWidth="0.500" />
      <polygon points={`${x2},${y2} ${at(2)} ${at(-3)}`} fill="#ccb668" />
    </g>
  );
}

function Viewport() {
  return (
    <main className="min-w-0 flex-1 overflow-hidden bg-linear-to-b from-[#b8b9ba] to-[#eaebec]">
      <svg viewBox="210 127 1120 713" className="block w-full font-['Noto_Sans',sans-serif]" fill="none" role="img" aria-label="图形窗口">
        <g stroke="#0a0af0" strokeWidth="1" shapeRendering="crispEdges">
          <path d="M1070 278L1156 293M1165 293H1230M1160 288L1152 376L1148 410" />
          <path d="M1107 285L1147 284L1198 292L1194 359L1152 360L1101 352z" />
        </g>
        <g fill="#0a0ad8">
          <path d="M1056 276l13-2 1 6zM1241 293l-13-4v8zM1147 427l-2-17h7z" />
        </g>
        <g fill="#3434e0" fontSize="12" textAnchor="middle">
          <text x="1049" y="280">Y</text>
          <text x="1245" y="298">Z</text>
          <text x="1146" y="438">X</text>
        </g>

        <g stroke="#0a8a88" strokeWidth="1" shapeRendering="crispEdges">
          <path d="M527 507L575 515M580 515H616M578 512L573 557L571 583" />
          <path d="M544 510L570 509L603 515L599 557L573 557L540 552z" />
        </g>
        <g fill="#0a8a88">
          <path d="M514 505l13-3-1 7zM628 515l-12-4v8zM569 598l-1-16h6z" />
        </g>
        <g fill="#2a9a98" fontSize="12" textAnchor="middle">
          <text x="507" y="509">Y</text>
          <text x="632" y="520">Z</text>
          <text x="569" y="610">X</text>
        </g>
        <path d="M1157 293.500h7M574 515.500h7" stroke="#dcdce4" />

        <path d="M591 305L1120 219M566 726L1103 406" stroke="#63b158" strokeWidth="1.500" />
        <path d="M591 305C620 311 637 390 637 480C637 590 605 720 568 726" stroke="#fb9f40" strokeWidth="3" />
        <path d="M1170 212C1192 217 1201 255 1202 285C1202 330 1181 373 1153 376" stroke="#fb9f40" strokeWidth="3" />

        <GoldArrow from={[1170, 212]} to={[1117, 220]} />
        <GoldArrow from={[1153, 376]} to={[1101, 406]} />
        <GoldArrow from={[1153, 376]} to={[1219, 387]} />
        <GoldArrow from={[566, 726]} to={[633, 738]} />

        <g>
          <circle cx="880" cy="259" r="9" stroke="#d42a20" />
          <circle cx="880" cy="259" r="5" fill="#8c5a28" />
          <path d="M876 256a5 5 0 0 1 4-2v10a5 5 0 0 1-4-2z" fill="#b8402c" />
          <circle cx="1201" cy="301" r="9" stroke="#d42a20" />
          <circle cx="1201" cy="301" r="5" fill="#c01c1c" />
          <circle cx="1199" cy="299" r="1.500" fill="#f07a6c" />
        </g>
      </svg>
    </main>
  );
}

/* ---------- dialog ---------- */

function Section({ title, className = "", children }) {
  const [open, setOpen] = useState(true);
  return (
    <section className={`mx-[5px] mb-[3px] border-b border-[#c4c4c4] bg-white px-[9px] ${className}`}>
      <button type="button" onClick={() => setOpen(!open)} aria-expanded={open} className="flex h-7 w-full items-start justify-between">
        <span className="-ml-0.5 text-[14px] leading-[26px] text-[#2583b5]">{title}</span>
        <Svg w={12} h={24} className="-mr-[3px]">
          <path d="M1 16l5-7 5 7" stroke="#2583b5" strokeWidth="2" />
        </Svg>
      </button>
      {open && children}
    </section>
  );
}

const ReverseIcon = () => (
  <Svg w={18} h={18}>
    <path d="M3 4l12 11" stroke="#222" strokeWidth="1.200" />
    <path d="M5 13l3-3M10 8l3-3" stroke="#0a0ab4" strokeWidth="2" />
    <path d="M10 3l6-1-1 6zM2 16l1-6 5 5z" fill="#0a0ab4" />
  </Svg>
);

const CurveIcon = () => (
  <Svg w={28} h={28}>
    <path d="M3.500 3v20M2 4.500h5M4 5l20 8M18 8l6 5M21 8l-3 5" stroke="#0a0ac8" strokeWidth="1.200" />
    <ellipse cx="20" cy="18" rx="3.500" ry="5" stroke="#0a0ac8" strokeWidth="1.500" />
    <path d="M13.500 5v21" stroke="#0a8a7c" strokeDasharray="6 2 2 2" />
    <path d="M4 9c11-2 20 2 21 17" stroke="#f03a1a" strokeWidth="2" />
  </Svg>
);

const OriginIcon = () => (
  <Svg w={28} h={28}>
    <path d="M3 24c14-4 16-11 7-18" stroke="#b0b0b0" strokeWidth="1.200" />
    <path d="M8 5l12 5" stroke="#c4aaaa" strokeWidth="1.200" />
    <circle cx="7" cy="5" r="2" fill="#c4a4a4" />
    <path d="M19 7l6 5-7-1z" fill="#c4a4a4" />
  </Svg>
);

const AddIcon = () => (
  <Svg w={20} h={20}>
    <path d="M6 3v6M3 6h6" stroke="#0a6cff" strokeWidth="2" />
    <circle cx="11.500" cy="11.500" r="3.500" stroke="#e01c1c" />
    <path d="M6 11.500h12M11.500 6v12" stroke="#222" />
    <circle cx="11.500" cy="11.500" r="1.500" fill="#e01c1c" />
  </Svg>
);

function CurveSection({ title, active = false }) {
  return (
    <Section title={title} className="pb-2">
      <div className="mt-0.5 flex h-8 items-center">
        <div className={`mr-1 flex h-8 flex-1 items-center gap-1 pl-1.5 text-[12px] ${active ? "bg-[#fcd66e]" : ""}`}>
          <Svg w={10} h={14}>
            <path d="M5 1v9M1 3l8 5M9 3L1 8" stroke="#e01414" strokeWidth="1.500" />
          </Svg>
          选择曲线 (2)
        </div>
        <button type="button" aria-label="反向" className="mr-0.5 flex size-6 items-center justify-center border border-[#a8a8a8] bg-white">
          <ReverseIcon />
        </button>
        <button
          type="button"
          aria-label="曲线"
          className={`flex size-8 items-center justify-center border ${active ? "border-[#fcd66e] bg-[#fbeab0]" : "border-[#a8a8a8] bg-white"}`}
        >
          <CurveIcon />
        </button>
      </div>
      <div className="mt-0.5 flex h-8 items-center justify-between text-[12px] text-[#9c9c9c]">
        指定原始曲线
        <button type="button" disabled aria-label="原始曲线" className="flex size-8 items-center justify-center border border-[#cfcfcf]">
          <OriginIcon />
        </button>
      </div>
      <div className="mt-0.5 flex h-6 items-center justify-between text-[12px]">
        添加新集
        <button
          type="button"
          aria-label="添加新集"
          className={`flex size-6 items-center justify-center border ${active ? "border-[#4ea2d4] bg-[#9ccbe6]" : "border-[#a8a8a8] bg-white"}`}
        >
          <AddIcon />
        </button>
      </div>
    </Section>
  );
}

const continuity = ["第一主线串", "最后主线串", "第一交叉线串", "最后交叉线串"];

function CurveMeshDialog() {
  const [all, setAll] = useState(true);
  return (
    <div role="dialog" aria-label="通过曲线网格" className="absolute left-[154px] top-[69px] w-[328px] border border-t-0 border-[#bcbcbc] bg-[#e6e6e6]">
      <div className="-mx-px flex h-6 items-center bg-[#5b8882] pl-[7px] pr-[9px] text-white">
        <Svg w={16} h={16}>
          <circle cx="8" cy="8" r="4.500" stroke="#fff" strokeWidth="2" />
          <path d="M8 1v2M8 13v2M1 8h2M13 8h2M3 3l1.500 1.500M11.500 11.500L13 13M13 3l-1.500 1.500M4.500 11.500L3 13" stroke="#fff" strokeWidth="2" />
          <circle cx="8" cy="8" r="1" fill="#fff" />
        </Svg>
        <h1 className="ml-[9px] flex-1 text-[13px]">通过曲线网格</h1>
        <button type="button" aria-label="重置">
          <Svg w={16} h={16}>
            <path d="M9 3a5 5 0 1 1-5.500 6" stroke="#fff" strokeWidth="1.800" />
            <path d="M1 10l2-5 4 4z" fill="#fff" />
          </Svg>
        </button>
        <button type="button" aria-label="关闭" className="ml-1">
          <Svg w={14} h={14}>
            <path d="M2 2l10 10M12 2L2 12" stroke="#fff" strokeWidth="2.200" />
          </Svg>
        </button>
      </div>
      <div className="pt-1">
        <CurveSection title="主曲线" />
        <CurveSection title="交叉曲线" active />
        <Section title="连续性" className="pb-2">
          <label className="flex h-[25px] items-center gap-[5px] text-[12px]">
            <span className="relative flex">
              <input
                type="checkbox"
                checked={all}
                onChange={(e) => setAll(e.target.checked)}
                className="peer size-[13px] appearance-none border border-[#8c8c8c] bg-[#e8ebf0]"
              />
              <span className="pointer-events-none absolute inset-0 hidden peer-checked:block">
                <Svg w={13} h={13}>
                  <path d="M3 6l3 4 4-8" stroke="#3c509c" strokeWidth="2" />
                </Svg>
              </span>
            </span>
            全部应用
          </label>
          <div className="flex flex-col gap-0.5">
            {continuity.map((name) => (
              <div key={name} className="flex items-center justify-between text-[12px]">
                <span>{name}</span>
                <Combo label={name} options={["G0（位置）", "G1（相切）", "G2（曲率）"]} height="h-[25px]" className="w-[141px]" />
              </div>
            ))}
          </div>
        </Section>
      </div>
      <button type="button" aria-label="更多选项" className="flex h-[13px] w-full items-center justify-center">
        <Svg w={10} h={5}>
          <path d="M0 0h10L5 5z" fill="#111" />
        </Svg>
      </button>
      <hr className="mx-[5px] border-[#cfcfcf]" />
      <div className="flex justify-end gap-[5px] pb-2.5 pr-[15px] pt-2 text-[12px]">
        <button type="button" disabled className="h-[25px] w-[54px] border border-[#b0b0b0] bg-[#dcdcdc] text-[#a4a4a4]">
          确定
        </button>
        <button type="button" disabled className="h-[25px] w-[54px] border border-[#b0b0b0] bg-[#dcdcdc] text-[#a4a4a4]">
          应用
        </button>
        <button type="button" className="h-[25px] w-[54px] border border-[#a8a8a8] bg-[#c9cacf]">
          取消
        </button>
      </div>
    </div>
  );
}

export default function App() {
  return (
    <div className="relative flex h-screen flex-col overflow-hidden bg-white font-['Noto_Sans','Noto_Sans_CJK_SC',sans-serif] text-[#111]">
      <Ribbon />
      <SelectionBar />
      <div className="flex min-h-0 flex-1">
        <ResourceBar />
        <Navigator />
        <Viewport />
      </div>
      <CurveMeshDialog />
    </div>
  );
}
